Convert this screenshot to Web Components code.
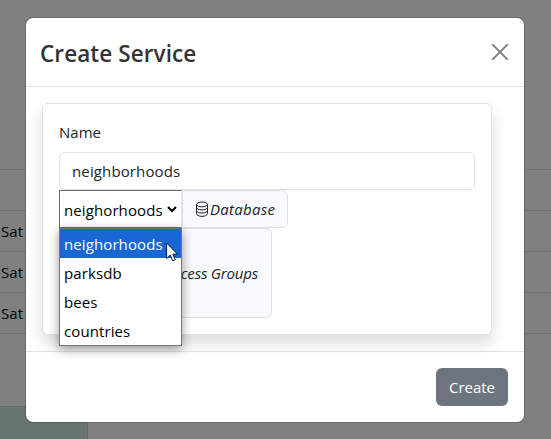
<!DOCTYPE html>
<html lang="en"><head><meta charset="utf-8"><title>Create Service</title>
<style>html,body{margin:0;height:100%;overflow:hidden}body{background:#808080;font:15px/24px "Open Sans","Noto Sans",sans-serif;color:#212529}</style></head>
<body><service-page></service-page>
<script>
const define=(name,html)=>customElements.define(name,class extends HTMLElement{
  constructor(){super();this.attachShadow({mode:'open'}).innerHTML=html;}
});

define('table-row',`<style>:host{display:block;box-sizing:border-box;height:41px;border-bottom:1px solid #6f7072;padding:8px 0 0 1px;color:#000;letter-spacing:.1px}</style><slot></slot>`);

define('page-backdrop',`<style>
:host{display:flex;flex-direction:column;height:439px;box-sizing:border-box;padding-top:129px}
.panel{margin-top:auto;box-sizing:border-box;width:88px;height:33px;background:#68746f;border:solid #5a6d66;border-width:1px 1px 0 0}
</style><table-row></table-row><table-row></table-row><table-row>Sat</table-row><table-row>Sat</table-row><table-row>Sat</table-row><div class="panel"></div>`);

define('close-button',`<style>:host{display:block;width:16px;height:16px}svg{display:block}</style>
<svg width="16" height="16" viewBox="0 0 16 16"><path d="M.9.9l14.2 14.2M15.1.9L.9 15.1" stroke="#7f7f7f" stroke-width="2" stroke-linecap="round"/></svg>`);

define('modal-dialog',`<style>
:host{display:flex;flex-direction:column;box-sizing:border-box;width:500px;height:406px;border:1px solid rgba(0,0,0,.175);border-radius:8px;background:#fff;background-clip:padding-box}
header{box-sizing:border-box;height:69px;border-bottom:1px solid #dee2e6;display:flex;justify-content:space-between;padding:0 16px 0 14px;align-items:center}
h5{margin:4px 0 0;font-size:22.5px;line-height:30px;font-weight:550;color:#333;letter-spacing:.08px;white-space:nowrap}
main{box-sizing:border-box;height:264px;padding:16px}
footer{box-sizing:border-box;height:71px;border-top:1px solid #dee2e6;padding:16px;display:flex;justify-content:flex-end}
</style><header><h5><slot name="title"></slot></h5><close-button></close-button></header><main><slot></slot></main><footer><slot name="footer"></slot></footer>`);

define('action-button',`<style>:host{display:flex;align-items:center;justify-content:center;width:72px;height:38px;border-radius:6px;background:#6c757d;color:#fff}</style><slot></slot>`);

define('form-card',`<style>:host{display:block;box-sizing:border-box;width:450px;height:232px;border:1px solid #dee2e6;border-radius:6px;background:#fff;box-shadow:0 8px 16px rgba(0,0,0,.15);padding:16px}</style><slot></slot>`);

define('text-field',`<style>:host{display:block}label{display:block;height:32px}.box{box-sizing:border-box;height:38px;border:1px solid #dee2e6;border-radius:6px;padding:6px 12px;letter-spacing:.13px}</style>
<label><slot name="label"></slot></label><div class="box"><slot></slot></div>`);

define('option-item',`<style>:host{display:block;height:29px;line-height:30px;padding-left:4px;color:#000}:host([selected]){background:#1967d2;color:#fff}</style><slot></slot>`);

define('select-box',`<style>
:host{display:block;position:relative;width:123px;height:38px;letter-spacing:.1px;color:#000}
.value{box-sizing:border-box;width:123px;height:38px;border:1px solid #6c6c6c;border-right-color:#dee2e6;background:#fff;display:flex;align-items:center;padding:1px 4px 0 4px;justify-content:space-between;white-space:nowrap}
.menu{position:absolute;z-index:2;left:0;top:38px;box-sizing:border-box;width:123px;height:118px;border:1px solid #767676;background:#fff;box-shadow:0 3px 10px rgba(0,0,0,.4)}
</style><div class="value"><slot name="value"></slot><svg width="10" height="7" viewBox="0 0 10 7"><path d="M1 1l4 4 4-4" fill="none" stroke="#000" stroke-width="2"/></svg></div><div class="menu"><slot></slot></div>`);

define('group-addon',`<style>:host{display:flex;box-sizing:border-box;align-items:center;border:1px solid #dee2e6;border-radius:0 6px 6px 0;background:#f8f9fa;font-style:italic;white-space:nowrap;letter-spacing:-.2px}</style><slot></slot>`);

define('database-icon',`<style>:host{display:block;width:16px;height:16px}svg{display:block}</style>
<svg width="16" height="16" viewBox="0 0 16 16" fill="none" stroke="#212529"><ellipse cx="8" cy="3.4" rx="5.5" ry="2.4"/><path d="M2.5 3.4v9.2C2.5 14 5 15.4 8 15.4s5.500-1.400 5.500-2.800V3.400M2.500 6.500c0 1.400 2.500 2.400 5.500 2.400s5.500-1 5.500-2.400M2.500 9.600c0 1.400 2.500 2.400 5.500 2.400s5.500-1 5.500-2.400"/></svg>`);

define('mouse-pointer',`<style>:host{display:block;position:absolute;z-index:5;left:166px;top:242px}svg{display:block}</style>
<svg width="13" height="20" viewBox="0 0 13 20"><path d="M.6 1v15.500l3.600-3.400 2.500 5.700 2.600-1.100-2.500-5.500h4.700z" fill="#fff" stroke="#081833"/></svg>`);

define('service-page',`<style>
:host{display:grid;width:551px;height:439px;position:relative}
page-backdrop,.layer{grid-area:1/1}
.layer{padding:17px 0 0 25px;z-index:1}
.row{display:flex}
.database{width:106px;padding-left:11px;letter-spacing:.28px}
.access{width:213px;height:90px;justify-content:flex-end;padding-right:13px;border-radius:6px}
</style><page-backdrop></page-backdrop><div class="layer"><modal-dialog>
<span slot="title">Create Service</span>
<form-card><text-field><span slot="label">Name</span>neighborhoods</text-field>
<div class="row"><select-box><span slot="value">neighorhoods</span><option-item selected>neighorhoods</option-item><option-item>parksdb</option-item><option-item>bees</option-item><option-item>countries</option-item></select-box>
<group-addon class="database"><database-icon></database-icon><span>Database</span></group-addon></div>
<group-addon class="access"><span>Access Groups</span></group-addon></form-card>
<action-button slot="footer">Create</action-button>
</modal-dialog></div><mouse-pointer></mouse-pointer>`);
</script></body></html>
